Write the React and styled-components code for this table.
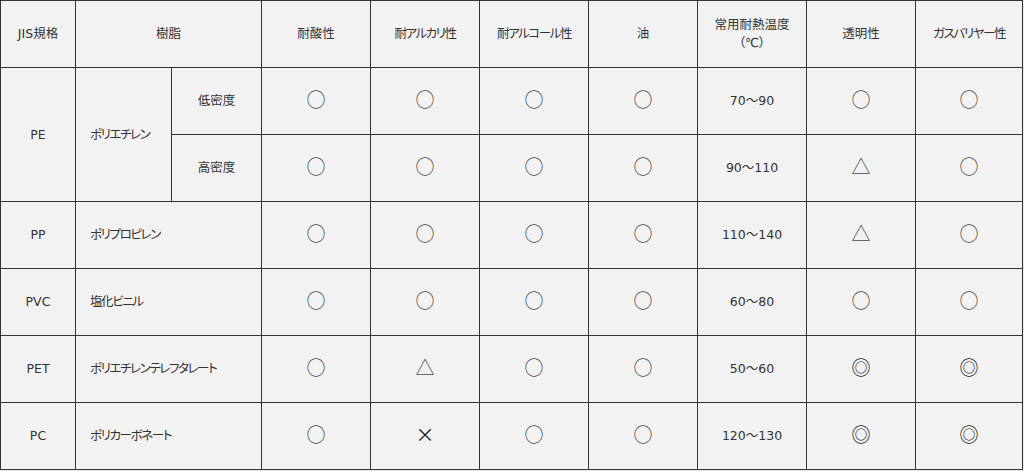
import React from 'react';
import styled, { createGlobalStyle } from 'styled-components';

const GlobalStyle = createGlobalStyle`
  html, body {
    margin: 0;
    padding: 0;
    background: #e9e9e9;
  }
  body {
    font-family: "DejaVu Sans", "Noto Sans CJK JP", sans-serif;
    font-feature-settings: "palt";
  }
`;

const Table = styled.table`
  width: 1022px;
  border-collapse: collapse;
  table-layout: fixed;
  background: #f2f2f2;
  color: #333;
  font-size: 12.5px;
`;

const Col = styled.col`
  width: ${(p) => p.w}px;
`;

const Row = styled.tr`
  height: 67px;
`;

const Cell = styled.td`
  border: 1px solid #333;
  padding: 0;
  padding-left: ${(p) => (p.left ? '14px' : '0')};
  text-align: ${(p) => (p.left ? 'left' : 'center')};
  vertical-align: middle;
  line-height: 18px;
  white-space: nowrap;
`;

const Head = styled(Cell).attrs({ as: 'th' })`
  font-weight: normal;
`;

// katakana in the original font is narrower than Noto's
const Label = styled.span`
  letter-spacing: ${(p) => (p.kana ? '-1.4px' : '0')};
`;

const Mark = styled.span`
  font-family: "Noto Sans CJK JP", sans-serif;
  font-size: 19px;
  font-feature-settings: normal;
  color: ${(p) => (p.dark ? '#222' : '#4a4a4a')};
`;

const cols = [75, 96, 90, 109, 109, 109, 109, 109, 109, 107];

const heads = ['耐酸性', '耐アルカリ性', '耐アルコール性', '油', null, '透明性', 'ガスバリヤー性'];

const rows = [
  { jis: 'PE', name: 'ポリエチレン', sub: '低密度', marks: ['○', '○', '○', '○'], temp: '70〜90', extra: ['○', '○'], span: 2 },
  { sub: '高密度', marks: ['○', '○', '○', '○'], temp: '90〜110', extra: ['△', '○'] },
  { jis: 'PP', name: 'ポリプロピレン', marks: ['○', '○', '○', '○'], temp: '110〜140', extra: ['△', '○'] },
  { jis: 'PVC', name: '塩化ビニル', marks: ['○', '○', '○', '○'], temp: '60〜80', extra: ['○', '○'] },
  { jis: 'PET', name: 'ポリエチレンテレフタレート', marks: ['○', '△', '○', '○'], temp: '50〜60', extra: ['◎', '◎'] },
  { jis: 'PC', name: 'ポリカーボネート', marks: ['○', '×', '○', '○'], temp: '120〜130', extra: ['◎', '◎'] },
];

const Text = ({ children }) => <Label kana={/[\u30A0-\u30FF]/.test(children)}>{children}</Label>;

const Symbol = ({ v }) => <Mark dark={v === '×' || v === '◎'}>{v}</Mark>;

export default function App() {
  return (
    <>
      <GlobalStyle />
      <Table>
        <colgroup>
          {cols.map((w, i) => (
            <Col key={i} w={w} />
          ))}
        </colgroup>
        <thead>
          <Row>
            <Head>JIS規格</Head>
            <Head colSpan={2}>樹脂</Head>
            {heads.map((h, i) =>
              h ? (
                <Head key={i}>
                  <Text>{h}</Text>
                </Head>
              ) : (
                <Head key={i}>
                  常用耐熱温度
                  <br />（℃）
                </Head>
              )
            )}
          </Row>
        </thead>
        <tbody>
          {rows.map((r, i) => (
            <Row key={i}>
              {r.jis && <Cell rowSpan={r.span || 1}>{r.jis}</Cell>}
              {r.name && (
                <Cell left rowSpan={r.span || 1} colSpan={r.sub ? 1 : 2}>
                  <Text>{r.name}</Text>
                </Cell>
              )}
              {r.sub && <Cell>{r.sub}</Cell>}
              {r.marks.map((m, j) => (
                <Cell key={j}>
                  <Symbol v={m} />
                </Cell>
              ))}
              <Cell>{r.temp}</Cell>
              {r.extra.map((m, j) => (
                <Cell key={j}>
                  <Symbol v={m} />
                </Cell>
              ))}
            </Row>
          ))}
        </tbody>
      </Table>
    </>
  );
}
